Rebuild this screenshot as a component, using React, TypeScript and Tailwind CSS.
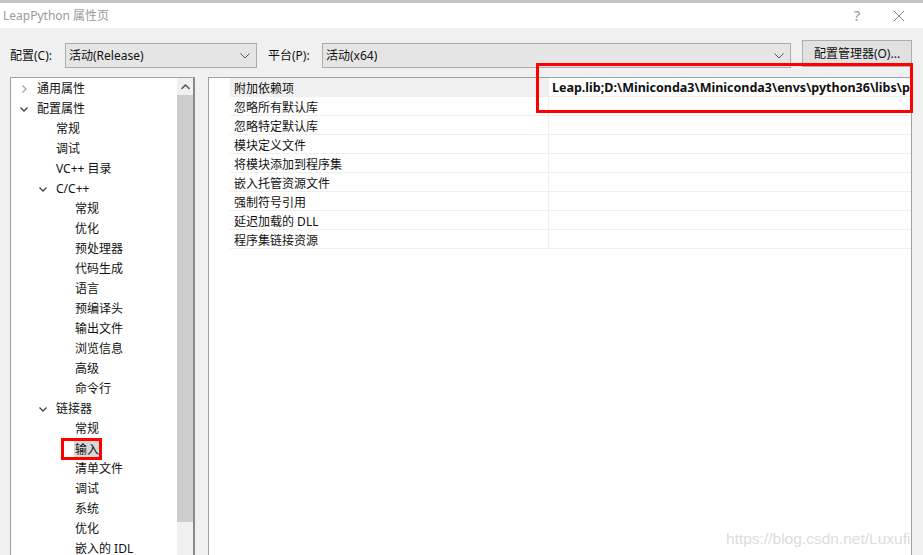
import * as React from 'react';

const font = 'font-["Noto_Sans","Noto_Sans_CJK_SC",sans-serif]';

type Node = { label: string; level: number; chevron?: 'open' | 'closed'; selected?: boolean };

const tree: Node[] = [
  { label: '通用属性', level: 0, chevron: 'closed' },
  { label: '配置属性', level: 0, chevron: 'open' },
  { label: '常规', level: 1 },
  { label: '调试', level: 1 },
  { label: 'VC++ 目录', level: 1 },
  { label: 'C/C++', level: 1, chevron: 'open' },
  { label: '常规', level: 2 },
  { label: '优化', level: 2 },
  { label: '预处理器', level: 2 },
  { label: '代码生成', level: 2 },
  { label: '语言', level: 2 },
  { label: '预编译头', level: 2 },
  { label: '输出文件', level: 2 },
  { label: '浏览信息', level: 2 },
  { label: '高级', level: 2 },
  { label: '命令行', level: 2 },
  { label: '链接器', level: 1, chevron: 'open' },
  { label: '常规', level: 2 },
  { label: '输入', level: 2, selected: true },
  { label: '清单文件', level: 2 },
  { label: '调试', level: 2 },
  { label: '系统', level: 2 },
  { label: '优化', level: 2 },
  { label: '嵌入的 IDL', level: 2 },
];

const props = [
  '附加依赖项',
  '忽略所有默认库',
  '忽略特定默认库',
  '模块定义文件',
  '将模块添加到程序集',
  '嵌入托管资源文件',
  '强制符号引用',
  '延迟加载的 DLL',
  '程序集链接资源',
];

function Chevron({ open }: { open: boolean }) {
  return open ? (
    <svg width="10" height="10" viewBox="0 0 10 10">
      <path d="M1.5 3.5 L5 7 L8.5 3.5" fill="none" stroke="#404040" strokeWidth="1.3" />
    </svg>
  ) : (
    <svg width="10" height="10" viewBox="0 0 10 10">
      <path d="M3.5 1.5 L7 5 L3.5 8.5" fill="none" stroke="#a6a6a6" strokeWidth="1.3" />
    </svg>
  );
}

function DropArrow() {
  return (
    <svg width="10" height="6" viewBox="0 0 10 6">
      <path d="M0.5 0.5 L5 5 L9.5 0.5" fill="none" stroke="#555" strokeWidth="1" />
    </svg>
  );
}

function Select({ value, width }: { value: string; width: string }) {
  return (
    <div className={`${width} h-[25px] bg-[#e5e5e5] border border-[#acacac] flex items-center pl-[3px] pr-[6px]`}>
      <span className="flex-1 text-[12px] text-[#111]">{value}</span>
      <DropArrow />
    </div>
  );
}

export default function App() {
  return (
    <div className={`relative w-[923px] h-[555px] overflow-hidden bg-[#f0f0f0] ${font}`}>
      <div className="h-[3px] bg-[#c4c4c4]" />
      {/* title bar */}
      <div className="h-[25px] bg-white flex items-center pl-[3px]">
        <span className="flex-1 text-[12px] text-[#9a9a9a]">LeapPython 属性页</span>
        <span className="w-[20px] text-center text-[15px] text-[#9a9a9a] mr-[26px]">?</span>
        <svg width="12" height="12" viewBox="0 0 12 12" className="mr-[18px]">
          <path d="M1 1 L11 11 M11 1 L1 11" stroke="#808080" strokeWidth="1" />
        </svg>
      </div>

      {/* config row */}
      <div className="h-[40px] flex items-end pl-[10px]">
        <div className="h-[25px] flex items-center text-[12px] text-[#111] w-[55px]">配置(C):</div>
        <Select value="活动(Release)" width="w-[192px]" />
        <div className="h-[25px] flex items-center text-[12px] text-[#111] ml-[11px] w-[54px]">平台(P):</div>
        <Select value="活动(x64)" width="w-[469px]" />
        <div className="ml-[11px] mb-[1px] w-[110px] h-[27px] bg-[#e1e1e1] border border-[#adadad] flex items-center justify-center text-[12px] text-[#111]">
          配置管理器(O)...
        </div>
      </div>

      {/* panels */}
      <div className="flex mt-[9px] pl-[10px]">
        {/* tree */}
        <div className="w-[185px] h-[480px] bg-white border-l border-t border-[#a0a0a0] border-r-2 border-r-[#8a8a8a] flex">
          <div className="flex-1 overflow-hidden">
            {tree.map((n, i) => (
              <div key={i} className="h-[20px] pt-[2px] flex items-center text-[12px] text-[#111]">
                <div
                  className={
                    n.level === 0 ? 'w-[25px] pl-[8px]' : n.level === 1 ? 'w-[44px] pl-[27px]' : 'w-[63px]'
                  }
                >
                  {n.chevron && <Chevron open={n.chevron === 'open'} />}
                </div>
                <span className={n.selected ? 'bg-[#d9d9d9] px-[1px] leading-[17px]' : 'px-[1px]'}>{n.label}</span>
              </div>
            ))}
          </div>
          <div className="w-[16px] flex flex-col bg-[#f0f0f0]">
            <div className="h-[17px] flex items-center justify-center">
              <svg width="9" height="6" viewBox="0 0 9 6">
                <path d="M0.5 5 L4.5 1 L8.5 5" fill="none" stroke="#606060" strokeWidth="1.6" />
              </svg>
            </div>
            <div className="h-[427px] bg-[#cdcdcd]" />
          </div>
        </div>

        {/* property grid */}
        <div className="ml-[13px] w-[704px] h-[480px] bg-white border-l border-t border-r border-[#a0a0a0]">
          {props.map((p, i) => (
            <div key={i} className="h-[19px] flex">
              <div className="w-[21px] bg-white" />
              <div
                className={`w-[318px] flex items-center pt-[3px] pl-[4px] text-[12px] text-[#111] border-b border-[#efefef] ${
                  i === 0 ? 'bg-[#f0f0f0]' : 'bg-white'
                }`}
              >
                {p}
              </div>
              <div className="flex-1 min-w-0 border-l border-b border-[#efefef] flex items-center pt-[3px] pl-[3px] overflow-hidden whitespace-nowrap">
                {i === 0 && (
                  <span className="text-[12.5px] font-bold text-[#111]">
                    Leap.lib;D:\Miniconda3\Miniconda3\envs\python36\libs\p
                  </span>
                )}
              </div>
            </div>
          ))}
        </div>
      </div>

      {/* red annotation boxes */}
      <div className="absolute left-[536px] top-[63px] w-[377px] h-[50px] border-[3px] border-[#ff0000]" />
      <div className="absolute left-[61px] top-[438px] w-[41px] h-[22px] border-[3px] border-[#ff0000]" />

      {/* watermark */}
      <div className="absolute left-[726px] top-[527px] text-[15.5px] text-[#dcdcdc] font-['Liberation_Sans',sans-serif]">
        https://blog.csdn.net/Luxufi
      </div>
    </div>
  );
}
